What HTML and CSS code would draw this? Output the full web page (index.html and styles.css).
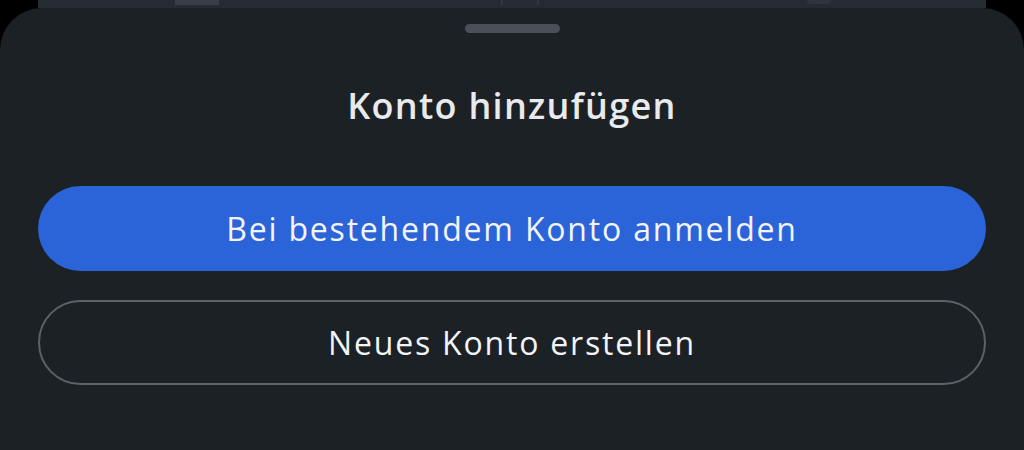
FILE: index.html
```html
<!DOCTYPE html>
<html>
<head>
    <meta charset="utf-8">
    <title>Konto hinzufügen</title>
    <link rel="stylesheet" href="styles.css">
</head>
<body>
    <!-- Seite dahinter (abgedunkelt) -->
    <div class="backdrop">
        <span class="backdrop-block"></span>
        <span class="backdrop-tick tick-a"></span>
        <span class="backdrop-tick tick-b"></span>
        <span class="backdrop-glyph"></span>
    </div>

    <!-- Bottom Sheet -->
    <div class="sheet">
        <div class="handle"></div>
        <h1 class="sheet-title">Konto hinzufügen</h1>
        <div class="sheet-actions">
            <button class="btn btn-primary">Bei bestehendem Konto anmelden</button>
            <button class="btn btn-outline">Neues Konto erstellen</button>
        </div>
    </div>
</body>
</html>
```

FILE: styles.css
```css
html, body {
    margin: 0;
    padding: 0;
    height: 100%;
}

body {
    background-color: #000;
    font-family: "Open Sans", "Liberation Sans", sans-serif;
    overflow: hidden;
    display: flex;
    flex-direction: column;
}

/* Inhalt hinter dem Sheet */
.backdrop {
    height: 8px;
    margin: 0 38px;
    background-color: #262b32;
    display: flex;
    align-items: flex-start;
    flex-shrink: 0;
}

.backdrop-block {
    width: 44px;
    height: 5px;
    margin-left: 137px;
    background-color: #3a3f47;
}

.backdrop-tick {
    width: 2px;
    height: 5px;
    background-color: #33383f;
}

.tick-a {
    margin-left: 282px;
}

.tick-b {
    margin-left: 34px;
}

.backdrop-glyph {
    width: 24px;
    height: 4px;
    margin-left: 268px;
    border-radius: 0 0 6px 6px;
    background-color: #30353c;
}

/* Sheet */
.sheet {
    flex: 1;
    background-color: #1c2126;
    border-radius: 42px 42px 0 0;
    padding: 16px 38px 0;
    display: flex;
    flex-direction: column;
    align-items: center;
}

.handle {
    width: 95px;
    height: 9px;
    border-radius: 5px;
    background-color: #4a5058;
}

.sheet-title {
    margin: 52px 0 0;
    color: #e8eaed;
    font-size: 36px;
    font-weight: 600;
    letter-spacing: 1.3px;
    line-height: 42px;
}

.sheet-actions {
    width: 100%;
    margin-top: 59px;
    display: flex;
    flex-direction: column;
    gap: 29px;
}

.btn {
    width: 100%;
    height: 85px;
    border-radius: 43px;
    font-family: inherit;
    font-size: 32px;
    font-weight: 400;
    letter-spacing: 1.8px;
    color: #f2f4f7;
    cursor: pointer;
}

.btn-primary {
    background-color: #2b64d8;
    border: none;
}

.btn-outline {
    background-color: transparent;
    border: 2px solid #5a626c;
}
```
